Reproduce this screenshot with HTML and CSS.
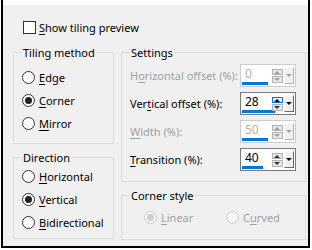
FILE: index.html
```html
<!DOCTYPE html>
<html lang="en">
<head>
  <meta charset="UTF-8">
  <title>Tiling</title>
  <link rel="stylesheet" href="styles.css">
</head>
<body>
  <div class="frame">
    <div class="panel">
      <div class="check"><span class="box"></span><span><u>S</u>how tiling preview</span></div>

      <div class="main">
        <div class="left">
          <fieldset class="group tiling">
            <legend>Tiling method</legend>
            <div class="radio"><span class="dot"></span><span><u>E</u>dge</span></div>
            <div class="radio"><span class="dot on"></span><span><u>C</u>orner</span></div>
            <div class="radio"><span class="dot"></span><span><u>M</u>irror</span></div>
          </fieldset>

          <fieldset class="group direction">
            <legend>Direction</legend>
            <div class="radio"><span class="dot"></span><span><u>H</u>orizontal</span></div>
            <div class="radio"><span class="dot on"></span><span><u>V</u>ertical</span></div>
            <div class="radio"><span class="dot"></span><span><u>B</u>idirectional</span></div>
          </fieldset>
        </div>

        <div class="right">
          <fieldset class="group settings">
            <legend>Settings</legend>
            <div class="row disabled">
              <span>H<u>o</u>rizontal offset (%):</span>
              <div class="spin">
                <div class="value"><span>0</span><div class="bar" style="width: 26px"></div></div>
                <div class="arrows"><span class="up"></span><span class="down"></span></div>
                <div class="drop"></div>
              </div>
            </div>
            <div class="row">
              <span>Ver<u>t</u>ical offset (%):</span>
              <div class="spin">
                <div class="value"><span>28</span><div class="bar" style="width: 33px"></div></div>
                <div class="arrows"><span class="up hot"></span><span class="down"></span></div>
                <div class="drop"></div>
              </div>
            </div>
            <div class="row disabled">
              <span><u>W</u>idth (%):</span>
              <div class="spin">
                <div class="value"><span>50</span><div class="bar" style="width: 26px"></div></div>
                <div class="arrows"><span class="up"></span><span class="down"></span></div>
                <div class="drop"></div>
              </div>
            </div>
            <div class="row">
              <span><u>T</u>ransition (%):</span>
              <div class="spin">
                <div class="value"><span>40</span><div class="bar" style="width: 21px"></div></div>
                <div class="arrows"><span class="up"></span><span class="down"></span></div>
                <div class="drop"></div>
              </div>
            </div>
          </fieldset>

          <fieldset class="group corner">
            <legend>Corner style</legend>
            <div class="options">
              <div class="radio disabled"><span class="dot on"></span><span><u>L</u>inear</span></div>
              <div class="radio disabled"><span class="dot"></span><span>C<u>u</u>rved</span></div>
            </div>
          </fieldset>
        </div>
      </div>
    </div>
  </div>
</body>
</html>
```

FILE: styles.css
```css
body {
  margin: 0;
  background: #fff;
  font-family: "Noto Sans", "Open Sans", sans-serif;
  font-size: 11px;
  color: #000;
}

u {
  text-decoration-thickness: 1px;
  text-underline-offset: 2px;
}

.frame {
  margin: 0 1px;
  width: 309px;
  height: 248px;
  border: 2px solid #000;
  border-top: none;
  padding-top: 5px;
  box-sizing: border-box;
}

.panel {
  background: #f0f0f0;
  height: 100%;
  padding: 16px 0 0 10px;
  box-sizing: border-box;
}

.check {
  display: flex;
  align-items: center;
  gap: 3px;
  height: 13px;
  padding-left: 10px;
}

.box {
  width: 13px;
  height: 13px;
  border: 1px solid #333;
  background: #fff;
  box-sizing: border-box;
}

.main {
  display: flex;
  gap: 7px;
  margin-top: 11px;
}

.left {
  width: 101px;
  display: flex;
  flex-direction: column;
  gap: 6px;
}

.right {
  width: 185px;
  display: flex;
  flex-direction: column;
  gap: 6px;
}

.group {
  margin: 0;
  border: 1px solid #dcdcdc;
  padding: 0 8px;
  min-width: 0;
}

legend {
  padding: 0 1px;
  line-height: 15px;
}

.tiling {
  height: 99px;
  box-sizing: border-box;
  padding-top: 6px;
}

.direction {
  height: 89px;
  box-sizing: border-box;
}

.radio {
  display: flex;
  align-items: center;
  gap: 4px;
  height: 23px;
}

.dot {
  width: 13px;
  height: 13px;
  border: 1px solid #333;
  border-radius: 50%;
  background: #fff;
  box-sizing: border-box;
  display: flex;
  align-items: center;
  justify-content: center;
}

.dot.on::after {
  content: "";
  width: 7px;
  height: 7px;
  border-radius: 50%;
  background: #222;
}

.radio.disabled {
  color: #a0a0a0;
}

.radio.disabled .dot {
  border-color: #cfcfcf;
  background: #f7f7f7;
}

.radio.disabled .dot.on::after {
  background: #cccccc;
}

.settings {
  height: 137px;
  box-sizing: border-box;
  padding: 4px 9px 0 8px;
  display: flex;
  flex-direction: column;
  gap: 5px;
}

.row {
  display: flex;
  align-items: center;
  justify-content: space-between;
  height: 23px;
}

.row.disabled {
  color: #a0a0a0;
}

.spin {
  width: 56px;
  height: 23px;
  border: 1px solid #7a7a7a;
  background: #fff;
  box-sizing: border-box;
  display: flex;
  align-items: center;
}

.row.disabled .spin {
  border-color: #cccccc;
}

.value {
  width: 31px;
  height: 100%;
  display: flex;
  flex-direction: column;
  justify-content: flex-end;
  padding: 0 0 1px 1px;
  box-sizing: border-box;
  color: #000;
}

.value span {
  padding-left: 3px;
  line-height: 16px;
  font-size: 12px;
}

.row.disabled .value {
  color: #bfae98;
}

.bar {
  height: 3px;
  background: #0078d7;
}

.arrows {
  width: 11px;
  height: 14px;
  display: flex;
  flex-direction: column;
  gap: 1px;
  margin-right: 1px;
}

.arrows span {
  flex: 1;
  background: #e6e6e6;
  border: 1px solid #b4b4b4;
  position: relative;
}

.arrows span::after {
  content: "";
  position: absolute;
  left: 1px;
  border-left: 3px solid transparent;
  border-right: 3px solid transparent;
}

.arrows .up::after {
  top: 1px;
  border-bottom: 3px solid #333;
}

.arrows .down::after {
  top: 1px;
  border-top: 3px solid #333;
}

.arrows .hot {
  background: #e5f1fb;
  border-color: #0078d7;
}

.arrows .hot::after {
  border-bottom-color: #000;
}

.row.disabled .arrows span::after {
  border-bottom-color: #a0a0a0;
  border-top-color: #a0a0a0;
}

.drop {
  width: 10px;
  height: 17px;
  background: #f0f0f0;
  border-left: 1px solid #fff;
  border-top: 1px solid #fff;
  border-right: 1px solid #696969;
  border-bottom: 1px solid #696969;
  box-sizing: border-box;
  display: flex;
  align-items: center;
  justify-content: center;
}

.drop::after {
  content: "";
  border-left: 3px solid transparent;
  border-right: 3px solid transparent;
  border-top: 3px solid #000;
}

.row.disabled .drop {
  border-right-color: #b4b4b4;
  border-bottom-color: #b4b4b4;
}

.row.disabled .drop::after {
  border-top-color: #a0a0a0;
}

.corner {
  height: 52px;
  box-sizing: border-box;
  padding: 0 8px 0 8px;
}

.options {
  display: flex;
  padding: 3px 0 0 14px;
}

.options .radio:first-child {
  width: 82px;
}
```
